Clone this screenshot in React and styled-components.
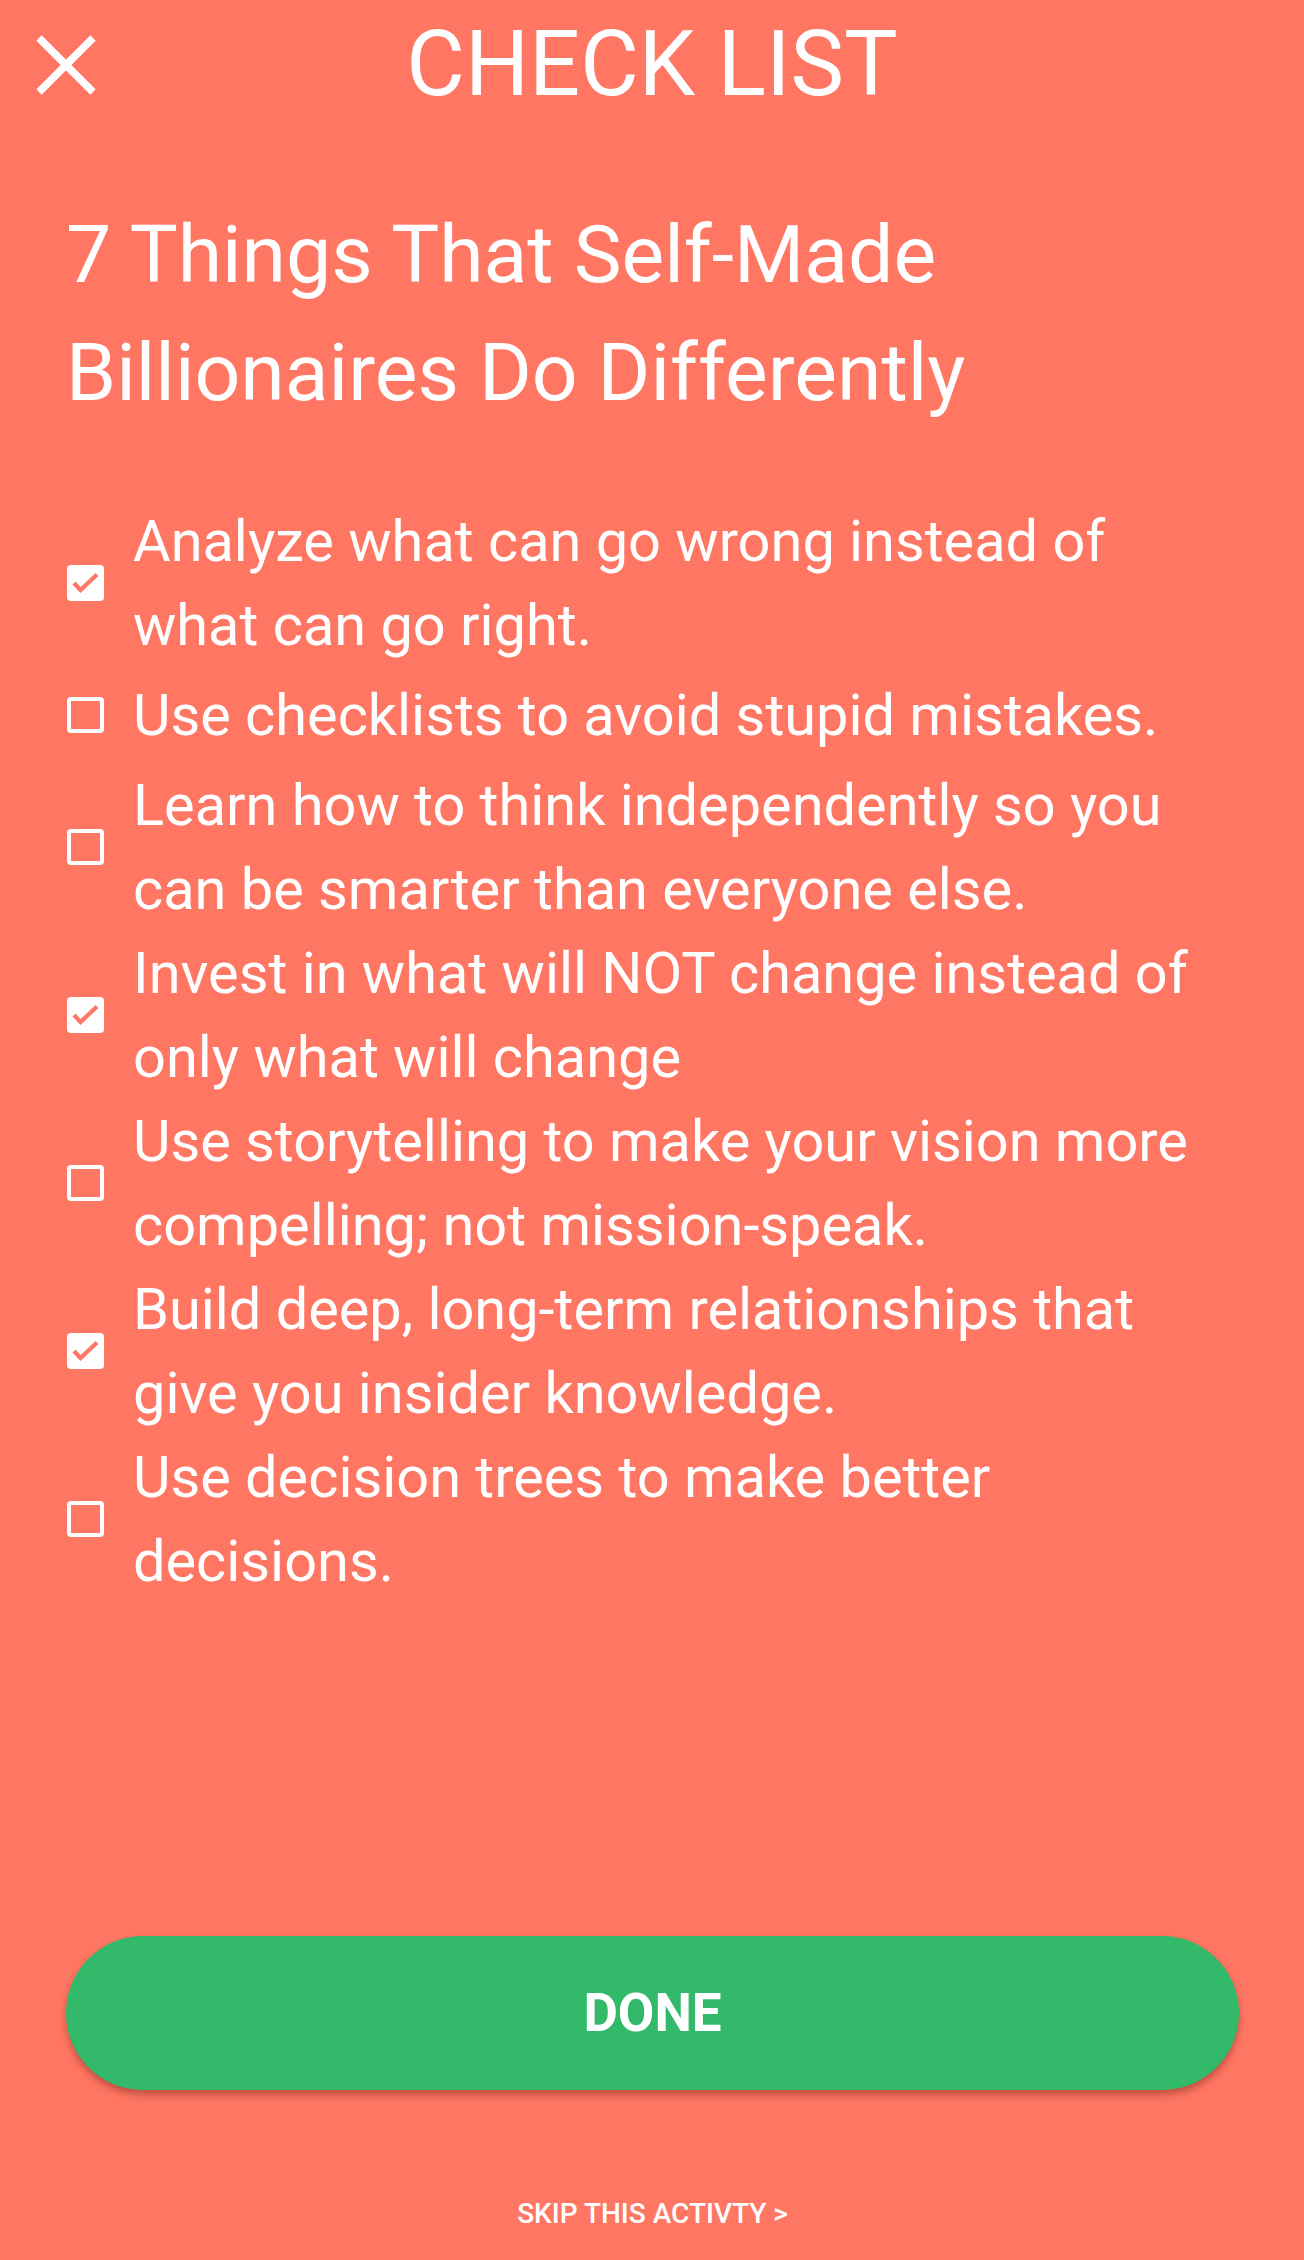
import React, { useState } from 'react';
import styled, { createGlobalStyle } from 'styled-components';

const GlobalStyle = createGlobalStyle`
	html, body {
		margin: 0;
		padding: 0;
		background-color: #ff7662;
	}
	body {
		font-family: Roboto, 'Liberation Sans', Arial, sans-serif;
		color: #ffffff;
	}
	* {
		box-sizing: border-box;
	}
`;

const ITEMS = [
	{ text: 'Analyze what can go wrong instead of what can go right.', done: true },
	{ text: 'Use checklists to avoid stupid mistakes.', done: false },
	{ text: 'Learn how to think independently so you can be smarter than everyone else.', done: false },
	{ text: 'Invest in what will NOT change instead of only what will change', done: true },
	{ text: 'Use storytelling to make your vision more compelling; not mission-speak.', done: false },
	{ text: 'Build deep, long-term relationships that give you insider knowledge.', done: true },
	{ text: 'Use decision trees to make better decisions.', done: false },
];

const CloseIcon = () => (
	<svg width="60" height="60" viewBox="0 0 60 60" fill="none">
		<path d="M3 3L57 57M57 3L3 57" stroke="#ffffff" strokeWidth="7.5" strokeLinecap="butt" />
	</svg>
);

const Check = () => (
	<svg width="36" height="36" viewBox="0 0 36 36" fill="none">
		<path d="M7 18L13.5 25L30 9.5" stroke="#ff7662" strokeWidth="4.2" strokeLinecap="butt" strokeLinejoin="miter" />
	</svg>
);

export default function App() {
	const [items, setItems] = useState(ITEMS);

	const toggle = (i) => {
		setItems(items.map((it, n) => (n === i ? { ...it, done: !it.done } : it)));
	};

	return (
		<Page>
			<GlobalStyle />
			<Toolbar>
				<CloseButton aria-label="close">
					<CloseIcon />
				</CloseButton>
				<Title>CHECK LIST</Title>
				<span />
			</Toolbar>

			<Heading>7 Things That Self-Made Billionaires Do Differently</Heading>

			<List>
				{items.map((it, i) => (
					<Row key={i} onClick={() => toggle(i)}>
						<Box $checked={it.done}>{it.done && <Check />}</Box>
						<RowText>{it.text}</RowText>
					</Row>
				))}
			</List>

			<Footer>
				<DoneButton>DONE</DoneButton>
				<SkipLink>SKIP THIS ACTIVTY &gt;</SkipLink>
			</Footer>
		</Page>
	);
}

const Page = styled.div`
	display: flex;
	flex-direction: column;
	min-height: 100vh;
	background-color: #ff7662;
`;

const Toolbar = styled.header`
	display: grid;
	grid-template-columns: 1fr auto 1fr;
	align-items: center;
	height: 130px;
`;

const CloseButton = styled.button`
	justify-self: start;
	display: flex;
	margin: 0 0 0 36px;
	padding: 0;
	border: none;
	background: none;
	cursor: pointer;
`;

const Title = styled.h1`
	margin: 0;
	font-size: 90px;
	font-weight: 400;
	line-height: 130px;
	color: #ffffff;
`;

const Heading = styled.h2`
	margin: 66px 0 0;
	padding: 0 60px 0 66px;
	font-size: 80.5px;
	font-weight: 400;
	line-height: 118px;
	color: #ffffff;
`;

const List = styled.ul`
	list-style: none;
	margin: 67px 0 0;
	padding: 0 66px 0 67px;
`;

const Row = styled.li`
	display: flex;
	align-items: center;
	gap: 29px;
	min-height: 96px;
	cursor: pointer;
`;

const Box = styled.span`
	flex: none;
	display: flex;
	width: 37px;
	height: 36px;
	border-radius: 4px;
	border: ${(p) => (p.$checked ? 'none' : '4px solid #ffffff')};
	background-color: ${(p) => (p.$checked ? '#ffffff' : 'transparent')};
`;

const RowText = styled.span`
	font-size: 57.7px;
	line-height: 84px;
	color: #ffffff;
`;

const Footer = styled.footer`
	margin-top: auto;
	display: flex;
	flex-direction: column;
	align-items: center;
	padding: 0 65px 26px 66px;
`;

const DoneButton = styled.button`
	width: 100%;
	height: 154px;
	border: none;
	border-radius: 77px;
	background-color: #32b96a;
	box-shadow: 0 5px 7px rgba(120, 40, 30, 0.45);
	font-family: Roboto, 'Liberation Sans', Arial, sans-serif;
	font-size: 53px;
	font-weight: 700;
	color: #ffffff;
	cursor: pointer;
`;

const SkipLink = styled.a`
	margin-top: 104px;
	font-size: 28px;
	font-weight: 500;
	line-height: 40px;
	color: #ffffff;
	cursor: pointer;
`;
